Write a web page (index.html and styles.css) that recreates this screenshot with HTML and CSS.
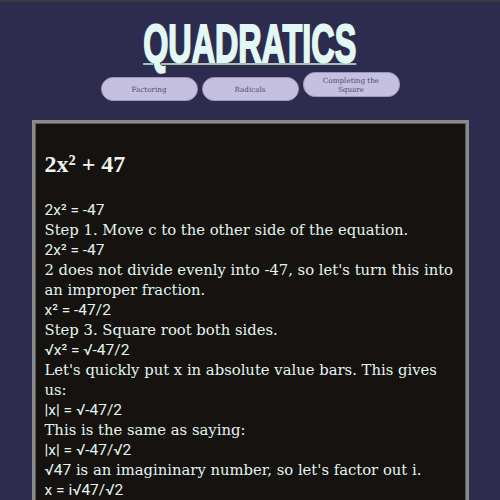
FILE: index.html
```html
<!DOCTYPE html>
<html>
<head>
<meta charset="utf-8">
<link rel="stylesheet" href="styles.css">
</head>
<body>
<header class="header">
  <h1 class="title"><span class="title-text">QUADRATICS</span></h1>
  <nav class="nav">
    <a class="pill">Factoring</a>
    <a class="pill">Radicals</a>
    <a class="pill pill-two">Completing the Square</a>
  </nav>
</header>
<main class="card">
  <h2 class="problem">2x² + 47</h2>
  <div class="steps">
    <p class="line math">2x² = -47</p>
    <p class="line">Step 1. Move c to the other side of the equation.</p>
    <p class="line math">2x² = -47</p>
    <p class="line">2 does not divide evenly into -47, so let's turn this into an improper fraction.</p>
    <p class="line math">x² = -47/2</p>
    <p class="line">Step 3. Square root both sides.</p>
    <p class="line math">√x² = √-47/2</p>
    <p class="line">Let's quickly put x in absolute value bars. This gives us:</p>
    <p class="line math">|x| = √-47/2</p>
    <p class="line">This is the same as saying:</p>
    <p class="line math">|x| = √-47/√2</p>
    <p class="line"><span class="math">√47</span> is an imagininary number, so let's factor out i.</p>
    <p class="line math">x = i√47/√2</p>
  </div>
</main>
</body>
</html>
```
FILE: styles.css
```css
html {
  border-top: 2px solid #3a3a3a;
  background: #2e2c4e;
}
body {
  margin: 0;
  background: #2e2c4e;
  font-family: "DejaVu Serif", serif;
}
.header {
  text-align: center;
  padding-top: 15px;
}
.title {
  margin: 0;
  font-family: "Liberation Sans", Arial, sans-serif;
  font-weight: 700;
  font-size: 53px;
  line-height: 53px;
  color: #e2f8f4;
}
.title-text {
  display: inline-block;
  transform: scaleX(0.61);
  -webkit-text-stroke: 2px #e2f8f4;
  text-decoration: underline;
  text-decoration-color: #a9bdb8;
  text-decoration-thickness: 2px;
  text-underline-offset: 1px;
}
.nav {
  margin-top: 2px;
  font-size: 0;
}
.pill {
  display: inline-block;
  box-sizing: border-box;
  width: 97px;
  height: 24px;
  margin: 0 2px;
  padding: 7px 4px 0;
  border: 1px solid #9d96bb;
  border-radius: 12px;
  background: #c5bfe0;
  color: #4f4970;
  font-family: "DejaVu Serif", serif;
  font-size: 7.2px;
  line-height: 9px;
  vertical-align: baseline;
}
.pill-two {
  height: 25px;
  padding: 3px 10px 0;
}
.card {
  box-sizing: border-box;
  width: 437px;
  margin: 19px auto 0;
  padding: 10px;
  border: 3px solid #8a8a8a;
  box-shadow: inset 0 0 0 1px #5c5c5c;
  background: #151210;
  color: #e3f4ef;
}
.problem {
  margin: 18px 0 22px;
  font-family: "Liberation Serif", "Times New Roman", serif;
  font-weight: 700;
  font-size: 24px;
  color: #eef3ef;
}
.steps {
  font-size: 14.8px;
  line-height: 20px;
}
.line {
  margin: 0;
}
.math {
  font-family: "Roboto", "DejaVu Sans", sans-serif;
  font-size: 15.5px;
}
```
